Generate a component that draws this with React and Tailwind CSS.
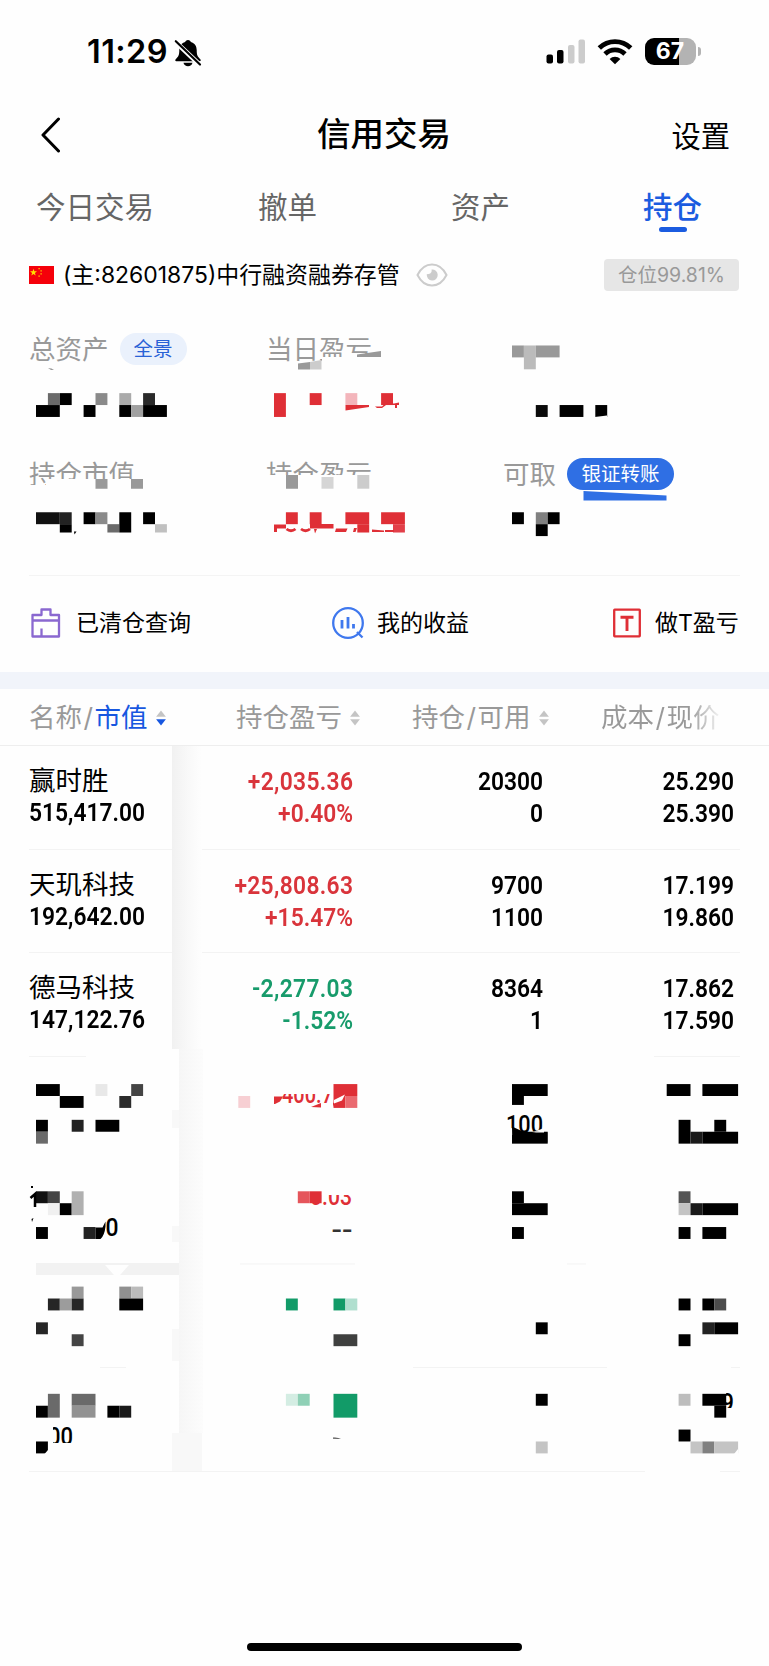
const CELL_W = 11.9;
const CELL_H = 11.913;

const RED = "#df2f36";
const GREEN = "#129b68";
const PAPER = "#fefefe";

// [column, row, column span, row span, colour]
const summaryCells = [
    [3, 34, 2, 1, "#000"], [4, 33, 1, 1, "#6a6a6a"], [5, 33, 1, 1, "#000"],
    [7, 34, 1, 1, "#000"], [8, 33, 1, 1, "#8a8a8a"], [10, 33, 1, 1, "#aaa"],
    [10, 34, 1, 1, "#000"], [11, 34, 1, 1, "#a0a0a0"], [12, 33, 1, 1, "#2a2a2a"],
    [12, 34, 2, 1, "#000"],
    [23, 33, 1, 2, RED], [26, 33, 1, 1, RED], [29, 33, 1, 1, "#f3b5bb"], [32, 33, 1, 1, RED],
    [43, 29, 1, 1, "#999"], [44, 29, 1, 2, "#bbb"], [45, 29, 2, 1, "#999"],
    [45, 34, 1, 1, "#0a0a0a"], [47, 34, 2, 1, "#000"], [50, 34, 1, 1, "#000"],
    [3, 43, 2, 1, "#111"], [5, 43, 1, 1, "#222"], [5, 44, 1, 0.7, "#000"],
    [7, 43, 1, 1, "#000"], [8, 43, 1, 1, "#8a8a8a"], [9, 44, 1, 0.7, "#6a6a6a"],
    [10, 43, 1, 1.7, "#000"], [12, 43, 1, 1, "#000"], [13, 44, 1, 0.7, "#c0c0c0"],
    [24, 43, 1, 1, RED], [26, 43, 1, 1, RED], [29, 43, 2, 1, RED], [32, 43, 2, 1, RED],
    [30, 44, 1, 0.7, RED], [33, 44, 1, 0.7, "#e23f49"],
    [43, 43, 1, 1, "#000"], [45, 43, 1, 1, "#808080"], [46, 43, 1, 1, "#000"], [45, 44, 1, 1, "#000"],
];

const tableCells = [
    [3, 91, 2, 1, "#000"], [5, 92, 2, 1, "#000"], [8, 91, 1, 1, "#e8e8e8"],
    [11, 91, 1, 1, "#444"], [10, 92, 1, 1, "#2b2b2b"], [3, 94, 1, 1, "#000"],
    [3, 95, 1, 1, "#6a6a6a"], [6, 94, 1, 1, "#222"], [8, 94, 2, 1, "#000"],
    [3, 100, 1, 1, "#111"], [4, 100, 1, 1, "#444"], [4, 101, 1, 1, "#f0f0f0"],
    [5, 101, 1, 1, "#000"], [6, 100, 1, 2, "#b0b0b0"], [3, 103, 1, 1, "#000"],
    [7, 103, 1, 1, "#222"],
    [6, 108, 1, 1, "#999"], [4, 109, 1, 1, "#262626"], [5, 109, 1, 1, "#9c9c9c"],
    [6, 109, 1, 1, "#262626"], [10, 108, 1, 1, "#909090"], [11, 108, 1, 1, "#bbb"],
    [10, 109, 2, 1, "#000"], [3, 111, 1, 1, "#262626"], [6, 112, 1, 1, "#444"],
    [3, 118, 1, 1, "#000"], [4, 117, 1, 2, "#6a6a6a"], [6, 117, 2, 1, "#6a6a6a"],
    [6, 118, 2, 1, "#929292"], [9, 118, 1, 1, "#000"], [10, 118, 1, 1, "#1a1a1a"],
    [3, 121, 1, 1, "#000"],
    [20, 92, 1, 1, "#f7cfd3"], [28, 91, 2, 1, RED], [28, 92, 1, 1, RED], [29, 92, 1, 1, "#ea6a70"],
    [25, 100, 1, 1, "#e5555b"], [26, 100, 1, 1, RED],
    [24, 109, 1, 1, GREEN], [28, 109, 1, 1, GREEN], [29, 109, 1, 1, "#b0dfcf"],
    [28, 112, 2, 1, "#3f403f"], [24, 117, 1, 1, "#d4ede3"], [25, 117, 1, 1, "#8fd0b6"],
    [28, 117, 2, 2, GREEN],
    [43, 91, 3, 1, "#000"], [43, 92, 1, 0.75, "#000"], [43, 95, 3, 1, "#000"],
    [43, 100, 1, 1, "#000"], [43, 101, 3, 1, "#000"], [43, 103, 1, 1, "#000"],
    [45, 111, 1, 1, "#000"], [45, 117, 1, 1, "#000"], [45, 121, 1, 1, "#c4c4c4"],
    [56, 91, 2, 1, "#000"], [59, 91, 3, 1, "#000"], [57, 94, 1, 2, "#000"],
    [58, 95, 1, 1, "#1a1a1a"], [59, 95, 3, 1, "#000"], [60, 94, 1, 1, "#000"],
    [57, 100, 1, 1, "#555"], [57, 101, 1, 1, "#c4c4c4"], [58, 101, 1, 1, "#1a1a1a"],
    [59, 101, 3, 1, "#000"], [57, 103, 1, 1, "#000"], [59, 103, 2, 1, "#000"],
    [57, 109, 1, 1, "#000"], [59, 109, 1, 1, "#000"], [60, 109, 1, 1, "#4c4c4c"],
    [59, 111, 1, 1, "#222"], [60, 111, 2, 1, "#000"], [57, 112, 1, 1, "#000"],
    [57, 117, 1, 1, "#bdbdbd"], [59, 117, 2, 1, "#000"], [60, 118, 1, 1, "#000"],
    [57, 120, 1, 1, "#000"], [58, 121, 1, 1, "#c4c4c4"], [59, 121, 1, 1, "#808080"],
    [60, 121, 2, 1, "#c4c4c4"],
];

const holdings = [
    { name: "赢时胜", value: "515,417.00", profit: "+2,035.36", rate: "+0.40%", up: true, held: "20300", usable: "0", cost: "25.290", price: "25.390" },
    { name: "天玑科技", value: "192,642.00", profit: "+25,808.63", rate: "+15.47%", up: true, held: "9700", usable: "1100", cost: "17.199", price: "19.860" },
    { name: "德马科技", value: "147,122.76", profit: "-2,277.03", rate: "-1.52%", up: false, held: "8364", usable: "1", cost: "17.862", price: "17.590" },
];

function Cells({ cells }) {
    return cells.map(([c, r, w, h, fill], i) => (
        <rect
            key={i}
            x={c * CELL_W + 0.3}
            y={r * CELL_H}
            width={w * CELL_W}
            height={h * CELL_H}
            fill={fill}
        />
    ));
}

function StatusBar() {
    return (
        <div className="flex h-[102px] items-center pl-[87px] pr-[68px]">
            <span className="mt-[2px] font-['Inter'] text-[32.500px] font-semibold leading-none tracking-[0.4px]">11:29</span>
            <svg className="ml-[6px] mt-[3px] h-[28px] w-[28px]" viewBox="0 0 28 28">
                <path d="M14 1c-1.600 0-2.600 1-2.800 2C7.200 4 5.300 7.300 5.300 11c0 5-.8 6.600-3.600 9.200-.9.900-.4 2 .6 2h23.400c1 0 1.500-1.100.6-2C23.500 17.600 22.700 16 22.700 11c0-3.700-1.900-7-5.900-8-.2-1-1.200-2-2.800-2Z" />
                <path d="M9.500 23.800h9c-.4 2-2.300 3.400-4.500 3.400s-4.100-1.400-4.500-3.400Z" />
                <path d="M1 2.500 26 26" stroke={PAPER} strokeWidth="4.800" />
                <path d="M1.800 2.200 26 25.500" stroke="#000" strokeWidth="2.200" strokeLinecap="round" />
            </svg>
            <svg className="ml-auto mt-[1px] h-[25px] w-[40px]" viewBox="0 0 40 25">
                <rect x="0.500" y="15.500" width="6.500" height="9" rx="2" />
                <rect x="11" y="11" width="6.500" height="13.500" rx="2" />
                <rect x="22" y="6" width="6.500" height="18.500" rx="2" fill="#ccc" />
                <rect x="32.500" y="0.500" width="6.500" height="24" rx="2" fill="#ccc" />
            </svg>
            <svg className="ml-[11px] mt-[1px] h-[26px] w-[36px]" viewBox="0 0 36 26" fill="none" stroke="#000" strokeWidth="4.800">
                <path d="M2.300 9a22.500 22.500 0 0 1 31.400 0" />
                <path d="M8 15a14.400 14.400 0 0 1 20 0" />
                <path d="M18 25.300 12.600 20a7.800 7.800 0 0 1 10.800 0Z" fill="#000" stroke="none" />
            </svg>
            <div className="ml-[12px] mt-[1px] flex h-[27px] w-[51px] items-center justify-center rounded-[9px] bg-[linear-gradient(90deg,#000_67%,#b3b3b3_67%)] pr-[1px] font-['Inter'] text-[23px] font-bold leading-none text-white">
                67
            </div>
            <div className="ml-[2px] mt-[1px] h-[9px] w-[3px] rounded-r-full bg-[#b3b3b3]" />
        </div>
    );
}

function SortArrows({ active }) {
    return (
        <svg className="ml-[8px] mt-[1px] h-[16px] w-[10px] shrink-0" viewBox="0 0 10 16">
            <path d="M5 .5 9.900 6.700H.1Z" fill="#c4c4c4" />
            <path d="M5 15.500.1 9.300h9.800Z" fill={active ? "#1757e0" : "#c4c4c4"} />
        </svg>
    );
}

function Num({ children, left, wide }) {
    return (
        <div className={left
            ? "origin-left scale-x-[0.86] whitespace-nowrap font-['Roboto'] text-[26.500px] font-semibold leading-[32px]"
            : "origin-right scale-x-[0.86] whitespace-nowrap text-right font-['Roboto'] text-[26.500px] font-semibold leading-[32px]"}
        >
            <span className={wide ? "-mr-[0.400px] tracking-[0.400px]" : ""}>{children}</span>
        </div>
    );
}

function Summary() {
    return (
        <section className="relative h-[265px] pt-[22px]">
            <div className="grid grid-cols-[237px_237px_1fr] pl-[29px] text-[26.500px] leading-[34px] text-[#999]">
                <div className="flex h-[125px] items-start">
                    <span>总资产</span>
                    <span className="ml-[11px] mt-[1px] h-[32px] w-[67px] rounded-full bg-[#eaf1fc] text-center text-[19.500px] leading-[32px] text-[#2962d6]">全景</span>
                </div>
                <span>当日盈亏</span>
                <span />
                <span>持仓市值</span>
                <span>持仓盈亏</span>
                <div className="flex items-start">
                    <span>可取</span>
                    <span className="ml-[11px] mt-[1px] h-[32px] w-[107px] rounded-full bg-[#2f6fe4] text-center text-[19.500px] leading-[32px] text-white">银证转账</span>
                </div>
            </div>
            <svg className="absolute inset-0 h-[265px] w-[769px]" viewBox="0 310 769 265">
                <path d="M322 357h68v15h-68Z" fill={PAPER} />
                <path d="M46 479h107v15H28v-9h18ZM262 475h120v20H262Z" fill={PAPER} />
                <Cells cells={summaryCells} />
                <path d="M357 354.500 381 351v6h-24Z" fill="#999" />
                <path d="M298 363.500 310 362v7.500h-12Z" fill="#999" />
                <path d="M310 362 321.500 360v9.500H310Z" fill="#ccc" />
                <path d="M48 368q4 0 6 2h-3Z" fill="#999" />
                <path d="M345.500 405H369v2l-23.500 3.500Z" fill={RED} />
                <path d="M375 406.500h7l3-3h9l5-1v2.500h-2v3h-2v-3h-9l-4 3h-5Z" fill={RED} />
                <path d="M595 417 607 415.500V418H595Z" fill={PAPER} />
                <path d="M95.500 479h12v9.700h-12ZM131 479h12v9.700h-12ZM286 475h12v13.700h-12Z" fill="#999" />
                <path d="M321.500 477h12v11.700h-12Z" fill="#d5d5d5" />
                <path d="M357.300 475h12v13.700h-12Z" fill="#ccc" />
                <path d="M74 531.500h2.500l-2 3Z" fill="#000" />
                <path d="M274 524.500h12v4h-9v3.500h-3ZM310 524h23.500v4.500H310ZM336 528.500h11.500l-1.500 3.500h-11ZM372 529.500l12 1v1.500h-12ZM385 530h9v2h-9ZM314 529h3l-2 4.500ZM354 528h3l-1.500 4H353Z" fill={RED} />
                <path d="M286.500 529q4.500 3.500 9 0M301 529q4.500 3.500 9 0" stroke={RED} strokeWidth="2.800" fill="none" />
                <path d="M583.500 491 666.500 495.500v5h-83Z" fill="#2f6fe4" />
            </svg>
        </section>
    );
}

function Shortcuts() {
    return (
        <div className="mx-[29px] flex h-[97px] items-center border-t border-[#f4f4f4] pb-[2px] text-[23px] leading-none">
            <svg className="ml-[2px] h-[30px] w-[30px]" viewBox="0 0 30 30" fill="none" stroke="#8a68d0" strokeWidth="2.300" strokeLinejoin="round">
                <path d="M1.500 7h9V1.500h9V7h8.500v21.500h-26.500ZM1.500 12.500h26.500M10.500 20.500v8" />
            </svg>
            <span className="ml-[15px] w-[114px] whitespace-nowrap">已清仓查询</span>
            <svg className="ml-[141px] h-[34px] w-[34px]" viewBox="0 0 34 34" fill="none" stroke="#3f78ee" strokeWidth="2.300">
                <circle cx="17" cy="17" r="14.800" />
                <path d="m26 26 5.500 5.500" />
                <path d="M11 14v8.500M17 11v11.500M22.500 18v4.500" strokeWidth="2.800" />
            </svg>
            <span className="ml-[12px] w-[93px] whitespace-nowrap">我的收益</span>
            <svg className="ml-[143px] h-[30px] w-[28px]" viewBox="0 0 28 30" fill="none" stroke="#df2f36">
                <rect x="1.200" y="1.700" width="25.600" height="26.600" strokeWidth="2.300" rx="0.500" />
                <path d="M7.500 9.300h13M14 9v14" strokeWidth="2.900" />
            </svg>
            <span className="ml-[14px] whitespace-nowrap">做T盈亏</span>
        </div>
    );
}

function Holdings() {
    return (
        <section className="relative h-[782px]">
            <div className="flex h-[57px] items-center border-b border-[#eeeeee] pl-[29px] text-[26.500px] leading-none text-[#999]">
                <div className="flex w-[207px] items-center">
                    名称<span className="mx-[1.500px]">/</span><span className="text-[#1757e0]">市值</span>
                    <SortArrows active />
                </div>
                <div className="flex w-[176px] items-center">
                    持仓盈亏
                    <SortArrows />
                </div>
                <div className="flex w-[189px] items-center">
                    持仓<span className="mx-[1.500px]">/</span>可用
                    <SortArrows />
                </div>
                <span className="bg-[linear-gradient(90deg,#999_75%,#fefefe_103%)] bg-clip-text py-1 text-transparent">
                    成本<span className="mx-[1.500px]">/</span>现价
                </span>
            </div>
            {holdings.map((h, i) => (
                <div key={h.name} className="relative grid h-[103.700px] grid-cols-[143px_181px_190px_191px] px-[29px] pt-[19px]">
                    <div>
                        <div className="text-[26.500px] leading-[31px]">{h.name}</div>
                        <Num left>{h.value}</Num>
                    </div>
                    <div className={h.up ? "text-[#d9343b]" : "text-[#179b6b]"}>
                        <Num wide>{h.profit}</Num>
                        <Num>{h.rate}</Num>
                    </div>
                    <div>
                        <Num>{h.held}</Num>
                        <Num>{h.usable}</Num>
                    </div>
                    <div>
                        <Num>{h.cost}</Num>
                        <Num>{h.price}</Num>
                    </div>
                    {i < 2 && <div className="absolute inset-x-[29px] bottom-0 h-px bg-[#f3f3f3]" />}
                </div>
            ))}
            <svg className="absolute inset-0 h-[793px] w-[769px]" viewBox="0 689 769 793">
                <defs>
                    <linearGradient id="edge">
                        <stop offset="0" stopColor="#f1f1f1" />
                        <stop offset="0.500" stopColor="#f8f8f8" />
                        <stop offset="1" stopColor="#fefefe" />
                    </linearGradient>
                    <linearGradient id="edgeSoft">
                        <stop offset="0" stopColor="#f6f6f6" />
                        <stop offset="1" stopColor="#fcfcfc" />
                    </linearGradient>
                    <clipPath id="cutTop"><rect x="280" y="1094" width="53" height="9" /></clipPath>
                    <clipPath id="cutMid"><rect x="310" y="1195" width="50" height="14" /></clipPath>
                    <clipPath id="cutHundred"><path d="M500 1110h45v18l-13 4-7 2-8-3-17-9Z" /></clipPath>
                    <clipPath id="cutZero"><rect x="53" y="1426" width="22" height="17" /></clipPath>
                    <clipPath id="cutNine"><rect x="726" y="1390" width="12" height="18" /></clipPath>
                </defs>
                <rect x="172" y="746" width="30" height="303" fill="url(#edge)" />
                <path d="M179 1049h24v384h-24Z" fill="url(#edgeSoft)" />
                <path d="M172 1110h7v18h-7ZM172 1226h7v16h-7ZM172 1329h7v32h-7ZM172 1433h30v38h-30Z" fill="#f8f8f8" />
                <path d="M29 1056.500h57M654 1056.500h86M240 1264h115M567 1264h19M100 1367.500h26M413 1367.500h194M731 1367.500h9M29 1471.500h616M720 1471.500h20" stroke="#f3f3f3" />
                <path d="M36 1263h143v12H36Z" fill="#f2f2f2" />
                <path d="M105 1265h24l-9 10h-6Z" fill={PAPER} />
                <Cells cells={tableCells} />
                <path d="M95.500 1227.500h7l3-6v5q-1 9-5 12.500h-5Z" fill="#000" />
                <path d="M274 1096.500h9l-3 5-5 2.500h-1ZM311 1107l10-4v4.500ZM333 1103l2-1-2 5Z" fill={RED} />
                <path d="m334 1100 11-5.500-3 6-8 3Z" fill={PAPER} />
                <path d="M512 1125l12 10 20-5v5h-32Z" fill={PAPER} />
                <path d="M512 1126.500 525 1132.500h22.300v10h-35Z" fill="#000" />
                <path d="M333 1437.500q5-.5 8 1.500l-8-.3Z" fill="#555" />
                <path d="m48 1450-3.500 4h3.500ZM738 1449l-4 5h4Z" fill={PAPER} />
                <path d="M31 1186h2v2h-2ZM31.500 1219l2-1-1.500 4Z" fill="#000" />
                <path d="m30.500 1198 4.500-4v13" stroke="#000" strokeWidth="2.500" fill="none" />
                <g fontFamily="Roboto, sans-serif" fontSize="26.500" fontWeight="500">
                    <text x="282" y="1102.500" textLength="51" lengthAdjust="spacingAndGlyphs" fill={RED} clipPath="url(#cutTop)">400.7</text>
                    <text x="310" y="1205" textLength="42" lengthAdjust="spacingAndGlyphs" fill={RED} clipPath="url(#cutMid)">0.03</text>
                    <text x="506" y="1133" textLength="37" lengthAdjust="spacingAndGlyphs" clipPath="url(#cutHundred)">100</text>
                    <text x="105.500" y="1235.500" textLength="13" lengthAdjust="spacingAndGlyphs">0</text>
                    <text x="48" y="1444.500" textLength="25" lengthAdjust="spacingAndGlyphs" clipPath="url(#cutZero)">00</text>
                    <text x="721" y="1411" textLength="13" lengthAdjust="spacingAndGlyphs" clipPath="url(#cutNine)">9</text>
                    <text x="331.500" y="1239" textLength="21" lengthAdjust="spacingAndGlyphs" fill="#333">--</text>
                </g>
            </svg>
        </section>
    );
}

function App() {
    return (
        <div className="flex h-[1666px] w-[769px] flex-col overflow-hidden bg-[#fefefe] font-['Inter','Noto_Sans_CJK_SC',sans-serif] text-black">
            <StatusBar />

            <header className="grid h-[66px] grid-cols-[1fr_auto_1fr] items-center pl-[38px] pr-[39px]">
                <svg className="h-[36px] w-[22px]" viewBox="0 0 22 36" fill="none" stroke="#000" strokeWidth="3" strokeLinecap="round" strokeLinejoin="round">
                    <path d="M20.500 2 5 18l15.500 16" />
                </svg>
                <h1 className="text-[33.500px] font-medium leading-none">信用交易</h1>
                <span className="justify-self-end pt-[3px] text-[29.300px] leading-none">设置</span>
            </header>

            <nav className="flex h-[78px] items-start pl-[36px] pt-[19px] text-[29.500px] leading-[40px] text-[#666]">
                <span className="w-[222px]">今日交易</span>
                <span className="w-[193px]">撤单</span>
                <span className="w-[192px]">资产</span>
                <div className="flex flex-col items-center font-medium text-[#1b5ce0]">
                    持仓
                    <div className="h-[5px] w-[28px] rounded-full bg-[#1b5ce0]" />
                </div>
            </nav>

            <div className="flex h-[64px] items-center pb-[6px] pl-[29px] pr-[30px] pt-0">
                <svg className="h-[18px] w-[25px]" viewBox="0 0 25 18">
                    <path d="M0 0h25v18H0Z" fill="#f5000a" />
                    <path d="m4.500 2.800.9 2.500h2.600L5.900 6.900l.8 2.500-2.200-1.500-2.200 1.500.8-2.500L1 5.300h2.600Z" fill="#ffde00" />
                    <path d="M9.500 2h1.200v1.200H9.500ZM11.500 4.200h1.200v1.200h-1.200ZM11.500 7.200h1.200v1.200h-1.200ZM9.500 9.500h1.200v1.200H9.500Z" fill="#ffde00" />
                </svg>
                <span className="ml-[9px] whitespace-nowrap text-[22.930px] leading-none">(主:82601875)中行融资融券存管</span>
                <svg className="ml-[16px] h-[24px] w-[32px]" viewBox="0 0 32 24">
                    <path d="M1.500 12C5 5 10 1.500 16 1.500S27 5 30.500 12C27 19 22 22.500 16 22.500S5 19 1.500 12Z" fill="none" stroke="#ccc" strokeWidth="2" />
                    <path d="M15.500 6.500c.8 3-1.500 5-4.700 4.600a5.500 5.500 0 1 0 4.700-4.600Z" fill="#ccc" />
                </svg>
                <span className="ml-auto h-[32px] w-[135px] rounded-[4px] bg-[#e6e6e6] text-center text-[19.500px] leading-[32px] text-[#999]">仓位99.81%</span>
            </div>

            <Summary />
            <Shortcuts />
            <div className="h-[17px] bg-[#f1f4fa]" />
            <Holdings />

            <div className="mx-auto mb-[15px] mt-auto h-[8px] w-[275px] rounded-full bg-black" />
        </div>
    );
}

export default App;
